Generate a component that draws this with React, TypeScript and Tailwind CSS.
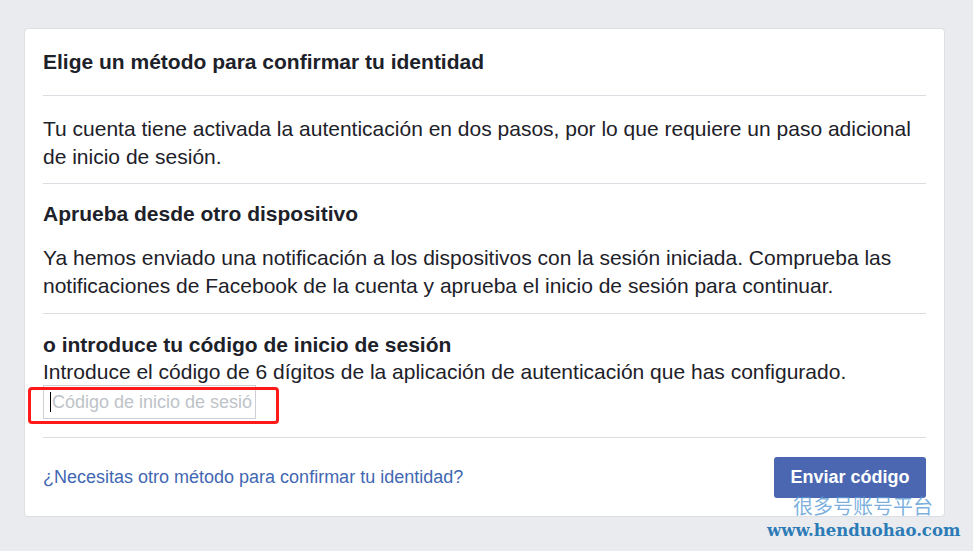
export default function App() {
  return (
    <div className="relative min-h-[551px] bg-[#e9ebee] pt-[28px] pl-[24px] font-['Liberation_Sans',Arial,sans-serif] text-[#1d2129]">
      <div className="w-[921px] h-[489px] rounded-[4px] border border-[#dddfe2] bg-white px-[18px]">
        <div className="flex h-[67px] items-center border-b border-[#dadde1]">
          <h2 className="text-[21px] font-bold leading-[24px]">Elige un método para confirmar tu identidad</h2>
        </div>

        <div className="border-b border-[#dadde1] pt-[19px] pb-[12px]">
          <p className="text-[21px] leading-[28px]">
            Tu cuenta tiene activada la autenticación en dos pasos, por lo que requiere un paso adicional de inicio de sesión.
          </p>
        </div>

        <div className="border-b border-[#dadde1] pt-[16px] pb-[13px]">
          <h3 className="text-[21px] font-bold leading-[28px]">Aprueba desde otro dispositivo</h3>
          <p className="mt-[16px] text-[21px] leading-[28px]">
            Ya hemos enviado una notificación a los dispositivos con la sesión iniciada. Comprueba las notificaciones de Facebook de la cuenta y aprueba el inicio de sesión para continuar.
          </p>
        </div>

        <div className="relative border-b border-[#dadde1] pt-[17px] pb-[18px]">
          <h3 className="text-[21px] font-bold leading-[28px]">o introduce tu código de inicio de sesión</h3>
          <p className="text-[21px] leading-[26px]">
            Introduce el código de 6 dígitos de la aplicación de autenticación que has configurado.
          </p>
          <div className="flex h-[34px] w-[213px] items-center overflow-hidden whitespace-nowrap border border-[#ccd0d5] bg-white pl-[6px] text-[18px] text-[#bec3c9]">
            <span className="mr-[1px] h-[20px] w-[1px] shrink-0 bg-black" />
            Código de inicio de sesió
          </div>
          <div className="absolute left-[-15px] top-[73px] h-[37px] w-[251px] rounded-[4px] border-[3px] border-[#ff1a1a]" />
        </div>

        <div className="flex items-center justify-between pt-[19px]">
          <a href="#" className="text-[18px] text-[#4267b2]">¿Necesitas otro método para confirmar tu identidad?</a>
          <button className="h-[41px] w-[152px] rounded-[3px] bg-[#4b67b2] text-[18px] font-bold text-white">
            Enviar código
          </button>
        </div>
      </div>

      <div className="absolute left-[793px] top-[493px] text-[20px] leading-[26px] text-[#5b9bd5]/80 font-['Noto_Sans_CJK_SC',sans-serif]">
        很多号账号平台
      </div>
      <div className="absolute left-[767px] top-[520px] text-[16.5px] font-bold leading-[22px] text-[#2c7bb6] font-['DejaVu_Serif',serif]">
        www.henduohao.com
      </div>
    </div>
  );
}
